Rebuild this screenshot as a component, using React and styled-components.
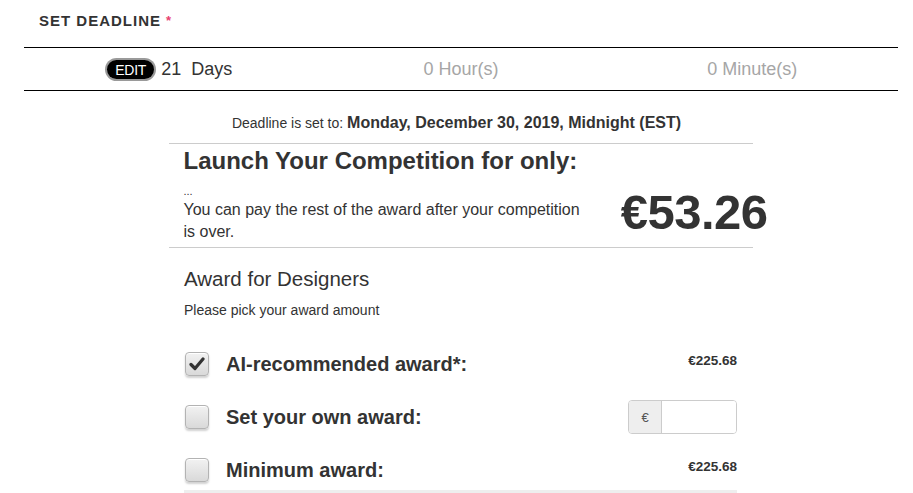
import React from "react";
import styled, { createGlobalStyle } from "styled-components";

const Global = createGlobalStyle`
  html, body { margin: 0; padding: 0; background: #fff; }
  body { font-family: "Liberation Sans", Arial, sans-serif; color: #333; }
`;

const Page = styled.div`
  width: 913px;
  height: 493px;
  overflow: hidden;
`;

const Section = styled.section`
  margin: 0 15px 0 24px;
`;

const Title = styled.h3`
  margin: 0;
  padding: 12px 0 0 15px;
  height: 47px;
  box-sizing: border-box;
  font-size: 15px;
  font-weight: bold;
  letter-spacing: 1px;
  color: #333;
  line-height: 18px;
`;

const Req = styled.span`
  color: #e8416f;
  margin-left: 5px;
  font-size: 13px;
  vertical-align: top;
`;

const TimeRow = styled.div`
  display: grid;
  grid-template-columns: repeat(3, 1fr);
  border-top: 1px solid #000;
  border-bottom: 1px solid #000;
  height: 44px;
  box-sizing: border-box;
  align-items: center;
`;

const TimeCell = styled.div`
  display: flex;
  align-items: center;
  justify-content: center;
  font-size: 18px;
  color: ${(p) => (p.$muted ? "#a6a6a6" : "#333")};
  gap: 5px;
  padding-top: 1px;
`;

const EditPill = styled.span`
  display: inline-flex;
  align-items: center;
  justify-content: center;
  background: #000;
  color: #fff;
  font-size: 14px;
  width: 47px;
  height: 19px;
  border-radius: 10px;
  box-shadow: 0 0 0 2px #9a9a9a;
  letter-spacing: -0.3px;
  margin-right: 2px;
`;

const DeadlineNote = styled.p`
  margin: 23px 0 0;
  text-align: center;
  font-size: 14px;
  line-height: 18px;
  color: #333;
  b { font-size: 16px; }
`;

const Card = styled.div`
  width: 584px;
  margin: 11px auto 0;
  border-top: 1px solid #ccc;
  border-bottom: 1px solid #ccc;
  padding: 3px 15px 4px;
  box-sizing: border-box;
  position: relative;
  left: 4px;
`;

const Launch = styled.h2`
  margin: 0;
  font-size: 24px;
  line-height: 28px;
  font-weight: bold;
  color: #333;
`;

const LaunchBody = styled.div`
  display: flex;
  align-items: center;
  justify-content: space-between;
`;

const LaunchText = styled.div`
  width: 410px;
  font-size: 16px;
  line-height: 22px;
  color: #333;
`;

const Dots = styled.div`
  font-size: 11px;
  line-height: 16px;
  margin-top: 8px;
`;

const Price = styled.div`
  font-size: 49px;
  font-weight: bold;
  letter-spacing: -0.5px;
  color: #333;
  margin-right: -30px;
  margin-top: 6px;
`;

const Awards = styled.div`
  width: 553px;
  margin: 0 auto;
  position: relative;
  left: 4px;
`;

const AwardTitle = styled.h4`
  margin: 19px 0 0;
  font-size: 20.5px;
  line-height: 24px;
  font-weight: normal;
  color: #333;
`;

const AwardHint = styled.p`
  margin: 11px 0 0;
  font-size: 14px;
  line-height: 16px;
  color: #333;
`;

const Options = styled.div`
  margin-top: 33px;
  display: flex;
  flex-direction: column;
  gap: 27px;
`;

const Option = styled.div`
  display: flex;
  align-items: center;
  height: 26px;
`;

const Box = styled.span`
  width: 22px;
  height: 22px;
  border: 1px solid #b3b3b3;
  border-radius: 4px;
  background: linear-gradient(#f2f2f2, #d9d9d9);
  box-shadow: 0 2px 2px rgba(0, 0, 0, 0.18), inset 0 1px 0 #fff;
  display: inline-flex;
  align-items: center;
  justify-content: center;
  margin-left: 1px;
  flex: none;
`;

const Label = styled.span`
  margin-left: 17px;
  font-size: 20px;
  font-weight: bold;
  color: #333;
  flex: 1;
`;

const Amount = styled.span`
  font-size: 13.5px;
  font-weight: bold;
  color: #333;
  margin-bottom: 8px;
`;

const InputGroup = styled.div`
  display: flex;
  width: 109px;
  height: 34px;
  border: 1px solid #ccc;
  border-radius: 4px;
  box-sizing: border-box;
  overflow: hidden;
`;

const Addon = styled.span`
  width: 32px;
  background: #eee;
  border-right: 1px solid #ccc;
  display: flex;
  align-items: center;
  justify-content: center;
  font-size: 13px;
  color: #555;
`;

const Field = styled.span`
  flex: 1;
  background: #fff;
`;

const Bar = styled.div`
  margin-top: 7px;
  height: 10px;
  background: #eee;
`;

const Check = () => (
  <svg width="16" height="16" viewBox="0 0 16 16">
    <path d="M2 8.5 L6 12.5 L14 3" fill="none" stroke="#333" strokeWidth="3.2" strokeLinecap="round" strokeLinejoin="round" />
  </svg>
);

export default function App() {
  return (
    <Page>
      <Global />
      <Section>
        <Title>
          SET DEADLINE<Req>*</Req>
        </Title>
        <TimeRow>
          <TimeCell>
            <EditPill>EDIT</EditPill>
            <span>21&nbsp; Days</span>
          </TimeCell>
          <TimeCell $muted>0 Hour(s)</TimeCell>
          <TimeCell $muted>0 Minute(s)</TimeCell>
        </TimeRow>
      </Section>
      <DeadlineNote>
        Deadline is set to: <b>Monday, December 30, 2019, Midnight (EST)</b>
      </DeadlineNote>
      <Card>
        <Launch>Launch Your Competition for only:</Launch>
        <LaunchBody>
          <LaunchText>
            <Dots>...</Dots>
            You can pay the rest of the award after your competition is over.
          </LaunchText>
          <Price>€53.26</Price>
        </LaunchBody>
      </Card>
      <Awards>
        <AwardTitle>Award for Designers</AwardTitle>
        <AwardHint>Please pick your award amount</AwardHint>
        <Options>
          <Option>
            <Box><Check /></Box>
            <Label>AI-recommended award*:</Label>
            <Amount>€225.68</Amount>
          </Option>
          <Option>
            <Box />
            <Label>Set your own award:</Label>
            <InputGroup>
              <Addon>€</Addon>
              <Field />
            </InputGroup>
          </Option>
          <Option>
            <Box />
            <Label>Minimum award:</Label>
            <Amount>€225.68</Amount>
          </Option>
        </Options>
        <Bar />
      </Awards>
    </Page>
  );
}
